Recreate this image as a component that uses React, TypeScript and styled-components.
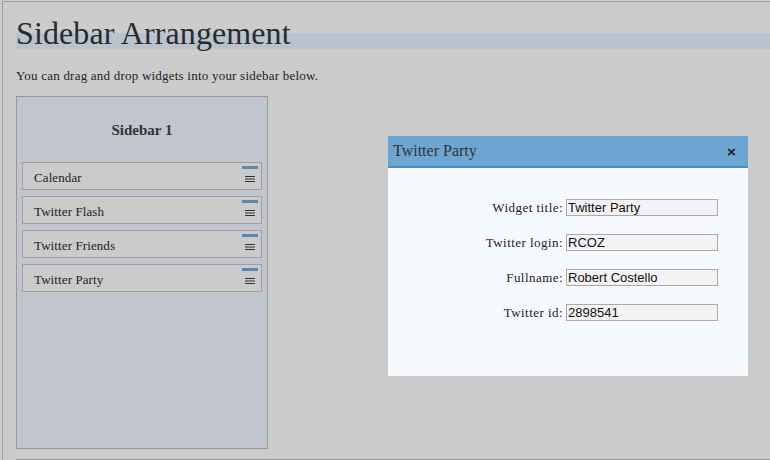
import React from "react";
import styled, { createGlobalStyle } from "styled-components";

const Global = createGlobalStyle`
  html, body { margin: 0; padding: 0; background: #cccccc; overflow: hidden; }
  body { font-family: "Liberation Serif", "Times New Roman", serif; color: #222; }
`;

const Page = styled.div`
  position: relative;
  margin: 1px 0 0 2px;
  min-height: 470px;
  border-top: 1px solid #a0a0a0;
  border-left: 1px solid #a0a0a0;
  padding: 13px 0 0 13px;
  box-sizing: border-box;
`;

const Title = styled.h1`
  margin: 0;
  height: 36px;
  font-size: 32px;
  line-height: 36px;
  font-weight: normal;
  letter-spacing: 0.1px;
  color: #2a2a2a;
  background: linear-gradient(
    to bottom,
    transparent 18px,
    #b9c3cd 18px,
    #b9c3cd 34px,
    transparent 34px
  );
`;

const Intro = styled.p`
  margin: 17px 0 13px;
  font-size: 13px;
  line-height: 15px;
  letter-spacing: 0.22px;
  color: #222;
`;

const SidebarBox = styled.section`
  width: 252px;
  height: 353px;
  box-sizing: border-box;
  border: 1px solid #999;
  background: #c1c5cd;
  padding: 25px 5px 0;
  display: flex;
  flex-direction: column;
`;

const SidebarTitle = styled.h2`
  margin: 0 0 23px;
  font-size: 15px;
  line-height: 17px;
  font-weight: bold;
  text-align: center;
  color: #333;
`;

const WidgetList = styled.div`
  display: flex;
  flex-direction: column;
  gap: 6px;
`;

const WidgetItem = styled.div`
  position: relative;
  height: 28px;
  box-sizing: border-box;
  border: 1px solid #a0a0a0;
  background: #cbcbcb;
  padding: 7px 0 0 11px;
  font-size: 13px;
  line-height: 15px;
  letter-spacing: 0.1px;
  color: #222;
`;

const DragBar = styled.span`
  position: absolute;
  top: 3px;
  right: 3px;
  width: 16px;
  height: 3px;
  background: #5a88b2;
`;

const Handle = styled.svg`
  position: absolute;
  top: 13px;
  right: 6px;
`;

const FooterRule = styled.div`
  margin-top: 10px;
  height: 1px;
  background: #999;
`;

const Dialog = styled.div`
  position: absolute;
  left: 385px;
  top: 134px;
  width: 360px;
  height: 240px;
  background: #f6faff;
  display: flex;
  flex-direction: column;
`;

const DialogHeader = styled.div`
  height: 30px;
  background: #6ea6d3;
  border-bottom: 2px solid #4a8cc1;
  display: flex;
  align-items: center;
  justify-content: space-between;
  padding: 0 12px 0 5px;
`;

const DialogTitle = styled.span`
  font-size: 16px;
  color: #333;
`;

const Close = styled.span`
  font-family: "DejaVu Sans", sans-serif;
  font-weight: bold;
  font-size: 13px;
  color: #111;
  margin-right: -1px;
`;

const Form = styled.div`
  display: grid;
  grid-template-columns: 175px 152px;
  column-gap: 3px;
  row-gap: 18px;
  padding-top: 31px;
  align-items: center;
`;

const Label = styled.label`
  text-align: right;
  font-size: 13px;
  letter-spacing: 0.45px;
  color: #222;
`;

const Field = styled.input`
  width: 152px;
  height: 17px;
  box-sizing: border-box;
  border: 1px solid #ababab;
  background: #f3f3f3;
  padding: 0 1px;
  margin: 0;
  font-family: "Liberation Sans", Arial, sans-serif;
  font-size: 13px;
  color: #111;
  outline: none;
`;

const widgets = ["Calendar", "Twitter Flash", "Twitter Friends", "Twitter Party"];
const fields = [
  ["Widget title:", "Twitter Party"],
  ["Twitter login:", "RCOZ"],
  ["Fullname:", "Robert Costello"],
  ["Twitter id:", "2898541"],
];

export default function App() {
  return (
    <>
      <Global />
      <Page>
        <Title>Sidebar Arrangement</Title>
        <Intro>You can drag and drop widgets into your sidebar below.</Intro>
        <SidebarBox>
          <SidebarTitle>Sidebar 1</SidebarTitle>
          <WidgetList>
            {widgets.map((w) => (
              <WidgetItem key={w}>
                {w}
                <DragBar />
                <Handle width="10" height="7" viewBox="0 0 10 7">
                  <rect x="0" y="0" width="10" height="1" fill="#333" />
                  <rect x="0" y="2.5" width="10" height="1" fill="#333" />
                  <rect x="0" y="5" width="10" height="1" fill="#333" />
                </Handle>
              </WidgetItem>
            ))}
          </WidgetList>
        </SidebarBox>
        <FooterRule />
        <Dialog>
          <DialogHeader>
            <DialogTitle>Twitter Party</DialogTitle>
            <Close>×</Close>
          </DialogHeader>
          <Form>
            {fields.map(([l, v]) => (
              <React.Fragment key={l}>
                <Label>{l}</Label>
                <Field defaultValue={v} />
              </React.Fragment>
            ))}
          </Form>
        </Dialog>
      </Page>
    </>
  );
}
